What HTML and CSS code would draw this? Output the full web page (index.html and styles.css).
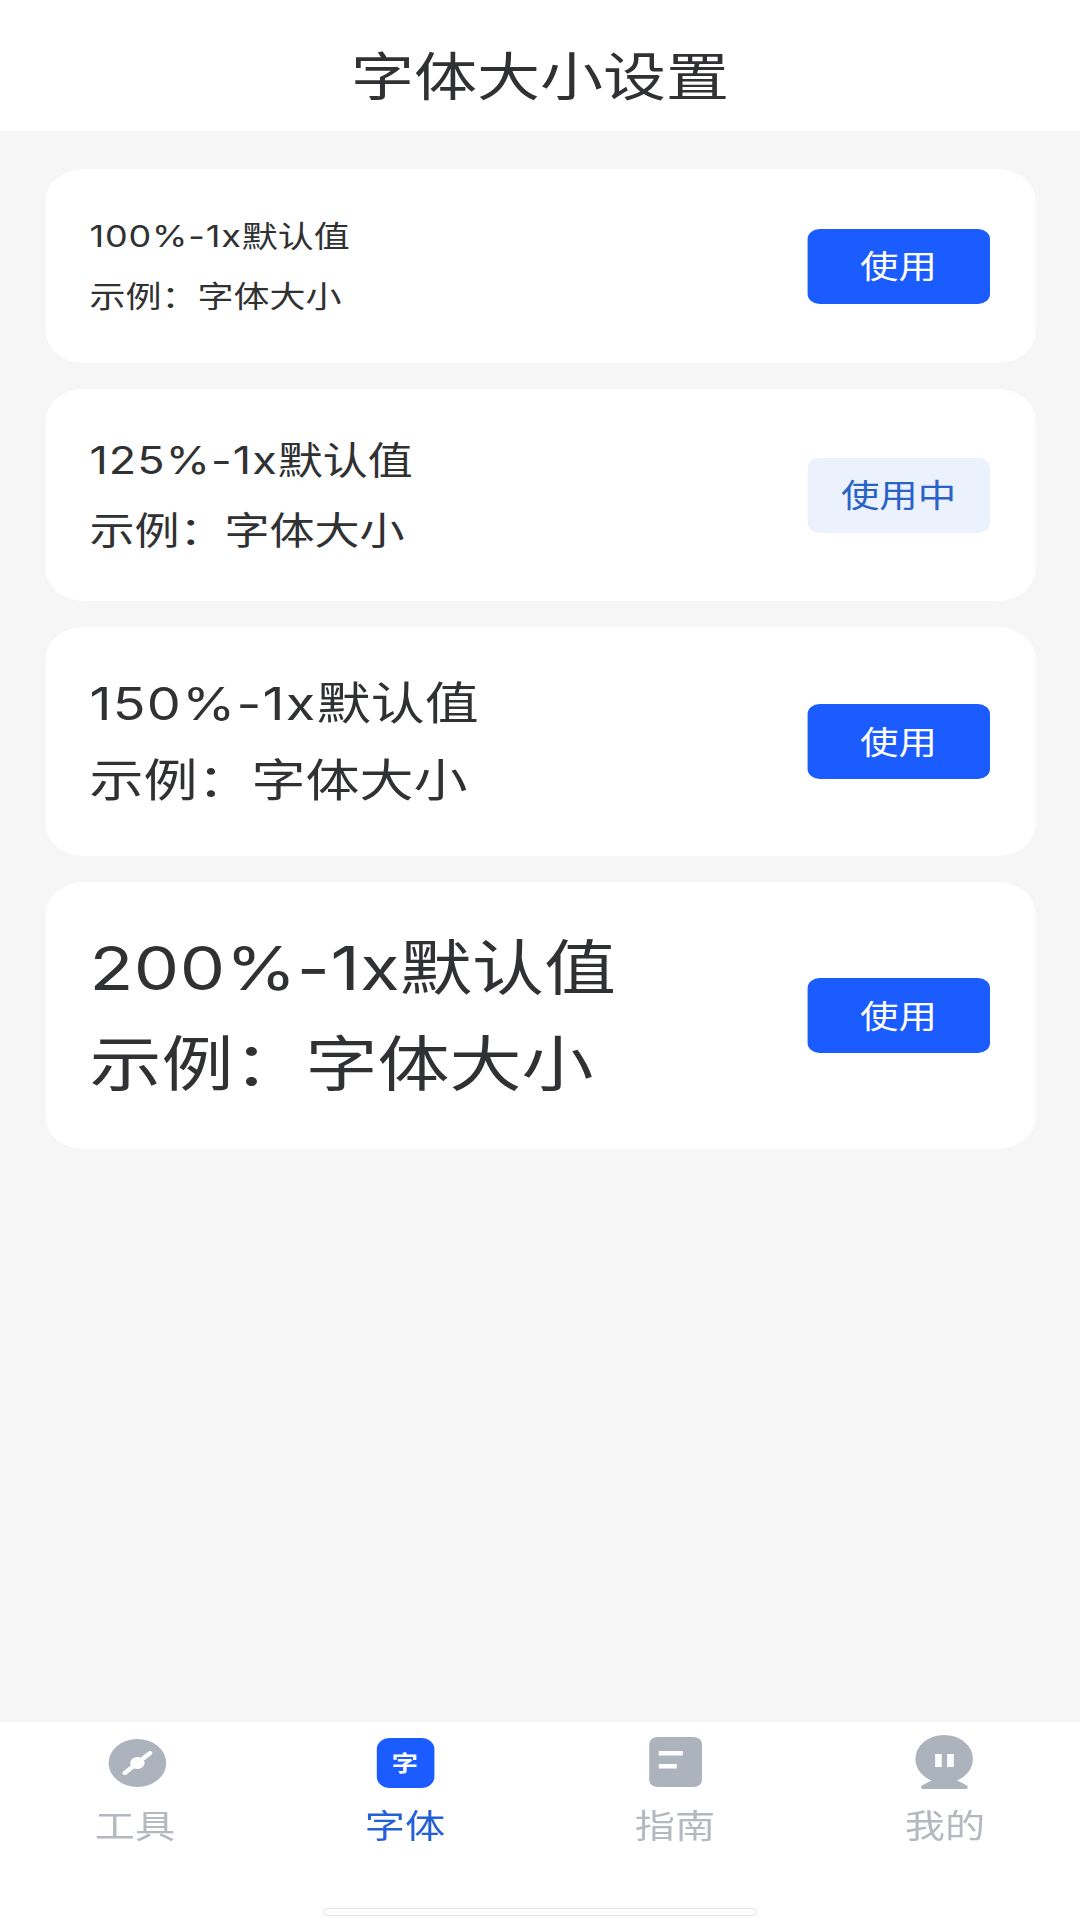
FILE: index.html
```html
<!DOCTYPE html>
<html lang="zh-CN">
<head>
<meta charset="utf-8">
<title>字体大小设置</title>
<link rel="stylesheet" href="styles.css">
</head>
<body>
<div class="page">
  <header class="header"><h1 class="title">字体大小设置</h1></header>
  <main class="content">
    <section class="card size-100">
      <div class="info"><p class="line"><span class="num">100%-1x</span>默认值</p><p class="line">示例：字体大小</p></div>
      <button class="btn">使用</button>
    </section>
    <section class="card size-125">
      <div class="info"><p class="line"><span class="num">125%-1x</span>默认值</p><p class="line">示例：字体大小</p></div>
      <button class="btn btn-active">使用中</button>
    </section>
    <section class="card size-150">
      <div class="info"><p class="line"><span class="num">150%-1x</span>默认值</p><p class="line">示例：字体大小</p></div>
      <button class="btn">使用</button>
    </section>
    <section class="card size-200">
      <div class="info"><p class="line"><span class="num">200%-1x</span>默认值</p><p class="line">示例：字体大小</p></div>
      <button class="btn">使用</button>
    </section>
  </main>
  <footer class="tabbar">
    <nav class="tabs">
      <a class="tab">
        <svg class="tab-icon" viewBox="0 0 60 54"><circle cx="31.500" cy="28" r="24" fill="#adb3bd"/><path d="M21 38 42 18" stroke="#fff" stroke-width="4" stroke-linecap="round"/><circle cx="31.500" cy="28" r="6" fill="#fff"/></svg>
        <span>工具</span>
      </a>
      <a class="tab tab-on">
        <span class="font-icon">字</span>
        <span>字体</span>
      </a>
      <a class="tab">
        <svg class="tab-icon" viewBox="0 0 60 54"><rect x="8" y="2" width="44" height="50" rx="7" fill="#adb3bd"/><rect x="16" y="16" width="20" height="4.500" fill="#fff"/><rect x="16" y="29" width="15" height="4.500" fill="#fff"/></svg>
        <span>指南</span>
      </a>
      <a class="tab">
        <svg class="tab-icon" viewBox="0 0 60 54"><path d="M11 54c-2 0-2-3 0-4l8-5h20l8 5c2 1 2 4 0 4z" fill="#adb3bd"/><ellipse cx="28.800" cy="24" rx="24" ry="24" fill="#adb3bd"/><rect x="21.300" y="19" width="5.500" height="13" fill="#fff"/><rect x="31.300" y="19" width="5.500" height="13" fill="#fff"/></svg>
        <span>我的</span>
      </a>
    </nav>
    <div class="home-bar"></div>
  </footer>
</div>
</body>
</html>
```
FILE: styles.css
```css
* { box-sizing: border-box; }
html, body { margin: 0; padding: 0; width: 1080px; height: 1920px; overflow: hidden; background: #f6f6f6; }
/* The reference is stretched 1.2x horizontally: lay out at 900 wide and stretch. */
.page {
  width: 900px;
  height: 1920px;
  transform: scaleX(1.2);
  transform-origin: 0 0;
  display: flex;
  flex-direction: column;
  font-family: "Noto Sans CJK SC", "Noto Sans", sans-serif;
  color: #303133;
}
.header {
  height: 131px;
  flex: none;
  background: #fff;
  padding-top: 16px;
  display: flex;
  align-items: center;
  justify-content: center;
}
.title { margin: 0; font-size: 52.500px; font-weight: 400; line-height: 1.2; }
.content {
  flex: 1;
  padding: 38px 37.5px 0;
  display: flex;
  flex-direction: column;
  gap: 26px;
}
.card {
  background: #fff;
  border-radius: 32px;
  padding: 0 37.5px 0 37px;
  display: flex;
  align-items: center;
  justify-content: space-between;
}
.info { display: flex; flex-direction: column; font-family: Inter, "Noto Sans CJK SC", sans-serif; }
.line { margin: 0; white-space: nowrap; }
.num { letter-spacing: 0.024em; }
.size-100 { height: 194px; }
.size-100 .info { font-size: 30px; line-height: 40px; gap: 20px; }
.size-125 { height: 212px; }
.size-125 .info { font-size: 37.5px; line-height: 50px; gap: 20px; padding-top: 2px; }
.size-150 { height: 229px; }
.size-150 .info { font-size: 45px; line-height: 60px; gap: 17px; padding-top: 2px; }
.size-200 { height: 267px; }
.size-200 .info { font-size: 60px; line-height: 80px; gap: 16px; }
.size-200 .num { letter-spacing: 0.007em; }
.btn {
  width: 152.500px;
  height: 75px;
  flex: none;
  border: 0;
  padding: 0 0 4px;
  border-radius: 10px;
  background: #1a5cff;
  color: #fff;
  font-family: inherit;
  font-size: 32px;
}
.btn-active { background: #ebf2fd; color: #2a62c8; }
.tabbar { height: 198px; flex: none; background: #fff; display: flex; flex-direction: column; align-items: center; }
.tabs { width: 100%; display: flex; padding-top: 13px; }
.tab {
  flex: 1;
  display: flex;
  flex-direction: column;
  align-items: center;
  color: #b4b8bf;
  font-size: 33.500px;
  line-height: 44px;
  gap: 13px;
}
.tab-on { color: #2460d8; }
.tab-icon { width: 60px; height: 54px; display: block; }
.font-icon {
  width: 48px;
  height: 50px;
  margin: 3px 0 1px;
  border-radius: 11px;
  background: #1a5cff;
  color: #fff;
  font-size: 22px;
  font-weight: 700;
  line-height: 47px;
  text-align: center;
}
.home-bar {
  width: 362px;
  height: 8px;
  margin-top: 62px;
  border: 1px solid #e6e6e8;
  border-radius: 4px;
  background: #fff;
}
```
